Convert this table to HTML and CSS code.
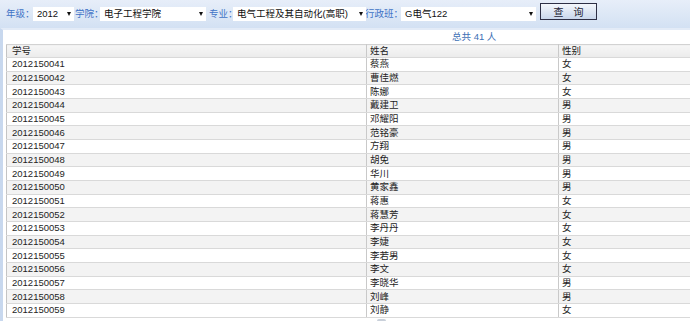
FILE: index.html
```html
<!DOCTYPE html>
<html lang="zh">
<head>
<meta charset="utf-8">
<title>学生名单</title>
<link rel="stylesheet" href="styles.css">
</head>
<body>
<div class="toolbar">
  <span class="lbl w27">年级：</span>
  <span class="sel s1">2012</span>
  <span class="lbl w25">学院：</span>
  <span class="sel s2">电子工程学院</span>
  <span class="lbl w24 ml3">专业：</span>
  <span class="sel s3">电气工程及其自动化(高职)</span>
  <span class="lbl w36">行政班：</span>
  <span class="sel s4">G电气122</span>
  <button class="btn">查 询</button>
</div>
<div class="panel">
  <div class="total">总共 41 人</div>
  <table class="grid">
    <colgroup><col class="c1"><col class="c2"><col class="c3"></colgroup>
    <thead><tr><th>学号</th><th>姓名</th><th>性别</th></tr></thead>
    <tbody>
      <tr><td>2012150041</td><td>蔡燕</td><td>女</td></tr>
      <tr><td>2012150042</td><td>曹佳燃</td><td>女</td></tr>
      <tr><td>2012150043</td><td>陈娜</td><td>女</td></tr>
      <tr><td>2012150044</td><td>戴建卫</td><td>男</td></tr>
      <tr><td>2012150045</td><td>邓耀阳</td><td>男</td></tr>
      <tr><td>2012150046</td><td>范铭豪</td><td>男</td></tr>
      <tr><td>2012150047</td><td>方翔</td><td>男</td></tr>
      <tr><td>2012150048</td><td>胡免</td><td>男</td></tr>
      <tr><td>2012150049</td><td>华川</td><td>男</td></tr>
      <tr><td>2012150050</td><td>黄家鑫</td><td>男</td></tr>
      <tr><td>2012150051</td><td>蒋惠</td><td>女</td></tr>
      <tr><td>2012150052</td><td>蒋慧芳</td><td>女</td></tr>
      <tr><td>2012150053</td><td>李丹丹</td><td>女</td></tr>
      <tr><td>2012150054</td><td>李婕</td><td>女</td></tr>
      <tr><td>2012150055</td><td>李若男</td><td>女</td></tr>
      <tr><td>2012150056</td><td>李文</td><td>女</td></tr>
      <tr><td>2012150057</td><td>李晓华</td><td>男</td></tr>
      <tr><td>2012150058</td><td>刘峰</td><td>男</td></tr>
      <tr><td>2012150059</td><td>刘静</td><td>女</td></tr>
    </tbody>
  </table>
  <div class="nub"></div>
</div>
</body>
</html>
```
FILE: styles.css
```css
html, body {
  margin: 0;
  padding: 0;
  background: #ffffff;
  overflow: hidden;
  font-family: "Liberation Sans", "Noto Sans CJK SC", sans-serif;
  font-size: 9.5px;
  color: #1a1a1a;
}

.toolbar {
  display: flex;
  align-items: flex-start;
  height: 28px;
  padding-left: 6px;
  background: linear-gradient(#e7eef9, #d3e1f3);
  box-sizing: border-box;
}

.lbl {
  color: #3f73c6;
  margin-top: 8px;
  line-height: 12px;
  white-space: nowrap;
  font-size: 9.5px;
}
.w27 { width: 27px; }
.w25 { width: 25px; }
.w24 { width: 24px; }
.w36 { width: 36px; }
.ml3 { margin-left: 3px; }

.sel {
  position: relative;
  margin-top: 7px;
  height: 14px;
  line-height: 14px;
  background: #ffffff;
  padding-left: 4px;
  box-sizing: border-box;
  color: #111;
  white-space: nowrap;
  font-size: 9.5px;
}
.sel::after {
  content: "";
  position: absolute;
  right: 3px;
  top: 5px;
  border-left: 2.5px solid transparent;
  border-right: 2.5px solid transparent;
  border-top: 4px solid #111;
}
.s1 { width: 41px; margin-right: 1px; }
.s2 { width: 106px; }
.s3 { width: 133px; margin-right: -1px; }
.s4 { width: 135px; }

.btn {
  margin-top: 3px;
  margin-left: 4px;
  width: 57px;
  height: 17px;
  padding: 0;
  border: 1px solid #2d2f45;
  background: linear-gradient(#f4f7fc, #c9d7ec);
  font-family: "Noto Sans CJK SC", sans-serif;
  font-size: 10px;
  color: #1c2233;
  letter-spacing: 4px;
  text-indent: 4px;
  line-height: 14px;
}

.panel {
  border-left: 3px solid #c8d8ee;
  border-top: 2px solid #e3ebf7;
  height: 293px;
  box-sizing: border-box;
  position: relative;
}

.total {
  height: 14px;
  line-height: 13px;
  padding-left: 449px;
  color: #4070b5;
  font-size: 9.5px;
}

.grid {
  margin-left: 3px;
  width: calc(100% - 3px);
  border-collapse: collapse;
  table-layout: fixed;
  border-left: 1px solid #c4c4c4;
}
.c1 { width: 360px; }
.c2 { width: 192px; }

.grid th, .grid td {
  text-align: left;
  font-weight: normal;
  padding: 0 3px;
  box-sizing: border-box;
  border-right: 1px solid #c9c9c9;
  border-bottom: 1px solid #d9d9d9;
  white-space: nowrap;
}
.grid th:last-child, .grid td:last-child { border-right: none; }
.grid th:first-child, .grid td:first-child { padding-left: 5px; }
.grid th {
  height: 13px;
  line-height: 12px;
  background: linear-gradient(#f6f6f6, #ebebeb);
  border-top: 1px solid #d2d2d2;
  color: #222;
}
.grid td {
  height: 13.68px;
  line-height: 12px;
  color: #1e1e1e;
}
.grid tbody tr:nth-child(even) td { background: #f3f3f3; }

.nub {
  position: absolute;
  left: 374px;
  bottom: 0;
  width: 9px;
  height: 2px;
  border-radius: 4px 4px 0 0;
  background: #c9d0da;
}
```
